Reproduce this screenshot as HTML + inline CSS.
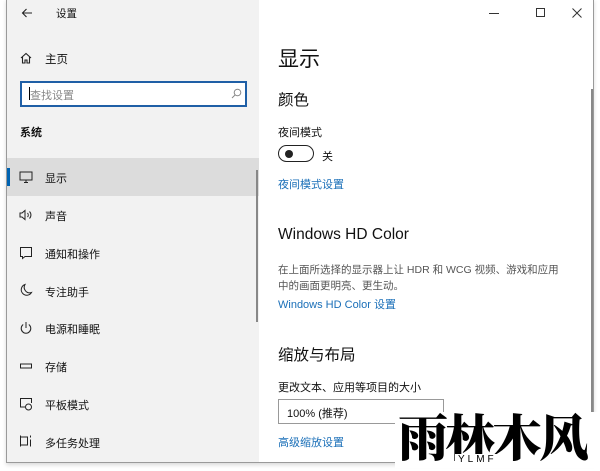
<!DOCTYPE html>
<html><head><meta charset="utf-8"><style>
*{margin:0;padding:0;box-sizing:border-box}
body{width:600px;height:468px;background:#fff;position:relative;overflow:hidden;font-family:"Liberation Sans","Noto Sans CJK SC",sans-serif;color:#111}
.win{position:absolute;left:6px;top:-1px;width:588px;height:464px;border:1px solid #9a9a9a;border-top:none;background:#fff;box-shadow:0 2px 4px rgba(0,0,0,.15)}
.left{position:absolute;left:0;top:0;width:252px;height:463px;background:#f2f2f2}
.t{position:absolute;font-size:11px;white-space:nowrap}
.sel{position:absolute;left:0;top:159px;width:252px;height:38px;background:#dcdcdc}
.bar{position:absolute;left:0;top:169px;width:3px;height:18px;background:#0063b1}
.ico{position:absolute;left:12px;width:14px;height:14px}
.blue{color:#1a6fb8}
.gray{color:#555}
</style></head><body>
<div class="win">
<div class="left">
<div class="sel"></div><div class="bar"></div>
<svg style="position:absolute;left:14px;top:8px" width="12" height="12" viewBox="0 0 12 12"><path d="M11 6H1.5M5.5 2L1.5 6l4 4" stroke="#222" fill="none" stroke-width="1.1"/></svg>
<div class="t" style="left:49px;top:7px;font-size:10.5px">设置</div>
<svg class="ico" style="top:52px" viewBox="0 0 14 14"><path d="M2 7L7 2.5 12 7M3.5 6V12H6V9h2v3h2.5V6" stroke="#222" fill="none" stroke-width="1.1"/></svg>
<div class="t" style="left:38px;top:52px;font-size:11.5px">主页</div>
<div style="position:absolute;left:13px;top:82px;width:227px;height:26px;border:2px solid #1f5fa6;background:#fff"></div>
<div style="position:absolute;left:22px;top:88px;width:1px;height:13px;background:#000"></div>
<div class="t" style="left:23px;top:88px;color:#888">查找设置</div>
<svg style="position:absolute;left:224px;top:89px" width="11" height="11" viewBox="0 0 11 11"><circle cx="6.5" cy="4.5" r="3.3" stroke="#888" fill="none"/><path d="M4 7L1 10" stroke="#888"/></svg>
<div class="t" style="left:13px;top:125px;font-weight:bold;font-size:11px">系统</div>
<svg class="ico" style="top:171px" viewBox="0 0 14 14"><rect x="1" y="2" width="12" height="8" stroke="#222" fill="none"/><path d="M5 12.5h4M7 10v2.5" stroke="#222"/></svg>
<div class="t" style="left:38px;top:171px">显示</div>
<svg class="ico" style="top:209px" viewBox="0 0 14 14"><path d="M1 5h2l3-2.5v9L3 9H1z" stroke="#222" fill="none"/><path d="M8.5 5a3 3 0 0 1 0 4M10.5 3.5a5 5 0 0 1 0 7" stroke="#222" fill="none"/></svg>
<div class="t" style="left:38px;top:209px">声音</div>
<svg class="ico" style="top:247px" viewBox="0 0 14 14"><path d="M1.5 1.5h11v9H6l-2.5 2V10.5h-2z" stroke="#222" fill="none"/></svg>
<div class="t" style="left:38px;top:247px">通知和操作</div>
<svg class="ico" style="top:284px" viewBox="0 0 14 14"><path d="M6 1.5a5.5 5.5 0 1 0 6.5 8A5.5 5.5 0 0 1 6 1.5z" stroke="#222" fill="none"/></svg>
<div class="t" style="left:38px;top:285px">专注助手</div>
<svg class="ico" style="top:322px" viewBox="0 0 14 14"><path d="M4.2 3.5a4.8 4.8 0 1 0 5.6 0M7 1v6" stroke="#222" fill="none"/></svg>
<div class="t" style="left:38px;top:322px">电源和睡眠</div>
<svg class="ico" style="top:360px" viewBox="0 0 14 14"><rect x="1.5" y="5" width="11" height="4" stroke="#222" fill="none"/></svg>
<div class="t" style="left:38px;top:360px">存储</div>
<svg class="ico" style="top:398px" viewBox="0 0 14 14"><path d="M6 10H1.5V1.5h11V6" stroke="#222" fill="none"/><circle cx="9.5" cy="10" r="3" stroke="#222" fill="none"/></svg>
<div class="t" style="left:38px;top:398px">平板模式</div>
<svg class="ico" style="top:435px" viewBox="0 0 14 14"><path d="M1.5 1.5v11M1.5 3h7v8h-7M11.5 1.5v2M11.5 5.5v7" stroke="#222" fill="none"/></svg>
<div class="t" style="left:38px;top:436px">多任务处理</div>
<div style="position:absolute;left:249px;top:171px;width:1.5px;height:152px;background:#888"></div>
</div>
<div style="position:absolute;left:482px;top:14px;width:10px;height:1px;background:#333"></div>
<div style="position:absolute;left:529px;top:9px;width:9px;height:9px;border:1px solid #333"></div>
<svg style="position:absolute;left:565px;top:9px" width="10" height="10"><path d="M0.5 0.5l9 9M9.5 0.5l-9 9" stroke="#333"/></svg>
<div class="t" style="left:271px;top:44px;font-size:21px">显示</div>
<div class="t" style="left:271px;top:89px;font-size:15.5px">颜色</div>
<div class="t" style="left:271px;top:125px">夜间模式</div>
<div style="position:absolute;left:271px;top:146px;width:36px;height:17px;border:1.5px solid #222;border-radius:9px"></div>
<div style="position:absolute;left:278px;top:151px;width:8px;height:8px;border-radius:50%;background:#222"></div>
<div class="t" style="left:315px;top:149px">关</div>
<div class="t blue" style="left:271px;top:177px">夜间模式设置</div>
<div class="t" style="left:271px;top:227px;font-size:15.5px">Windows HD Color</div>
<div class="t gray" style="left:271px;top:263px;font-size:10.5px">在上面所选择的显示器上让 HDR 和 WCG 视频、游戏和应用</div>
<div class="t gray" style="left:271px;top:279px;font-size:10.5px">中的画面更明亮、更生动。</div>
<div class="t blue" style="left:271px;top:297px">Windows HD Color 设置</div>
<div class="t" style="left:271px;top:344px;font-size:15.5px">缩放与布局</div>
<div class="t" style="left:271px;top:380px">更改文本、应用等项目的大小</div>
<div style="position:absolute;left:271px;top:400px;width:166px;height:25px;border:1.5px solid #999"></div>
<div class="t" style="left:280px;top:406px">100% (推荐)</div>
<div class="t blue" style="left:271px;top:435px">高级缩放设置</div>
<div style="position:absolute;left:584px;top:90px;width:1.5px;height:373px;background:#888"></div>
</div>
<div style="position:absolute;left:395px;top:412px;width:205px;height:56px;background:#fff"></div>
<div style="position:absolute;left:398px;top:407px;font-family:'Noto Serif CJK SC',serif;font-weight:900;font-size:50px;letter-spacing:-3px;line-height:56px;color:#000">雨林木风</div>
<div style="position:absolute;left:455px;top:454px;font-size:10px;letter-spacing:3px;color:#000;background:#fff;padding:0 3px">YLMF</div>
</body></html>
